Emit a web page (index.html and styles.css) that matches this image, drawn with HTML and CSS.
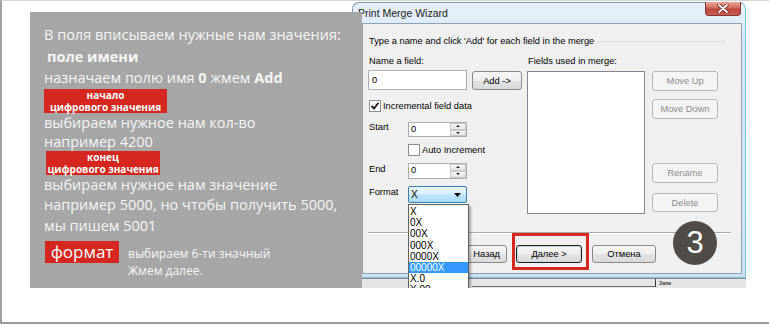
FILE: index.html
```html
<!DOCTYPE html>
<html lang="ru">
  <head>
    <meta charset="UTF-8" />
    <meta name="viewport" content="width=device-width, initial-scale=1.0" />
    <title>Print Merge Wizard</title>
    <link rel="stylesheet" href="styles.css">
  </head>
  <body>
    <div class="sheet">
      <div class="note">
        <div class="line">В поля вписываем нужные нам значения:</div>
        <div class="line sub"><b>поле имени</b></div>
        <div class="line">назначаем полю имя <b>0</b> жмем <b>Add</b></div>
        <div class="tag tag-start">начало<br>цифрового значения</div>
        <div class="line after">выбираем нужное нам кол-во</div>
        <div class="line after">например 4200</div>
        <div class="tag tag-end">конец<br>цифрового значения</div>
        <div class="line after">выбираем нужное нам значение</div>
        <div class="line">например 5000, но чтобы получить 5000,</div>
        <div class="line">мы пишем 5001</div>
        <div class="format-row">
          <span class="tag-big">формат</span>
          <div class="hint">выбираем 6-ти значный<br>Жмем далее.</div>
        </div>
      </div>

      <div class="shot">
        <div class="window">
          <div class="titlebar">
            <span class="title">Print Merge Wizard</span>
            <span class="close">
              <svg width="12" height="9" viewBox="0 0 12 9">
                <path d="M2 1 L10 8 M10 1 L2 8" stroke="#5a1c1c" stroke-width="3.2" stroke-linecap="round"/>
                <path d="M2 1 L10 8 M10 1 L2 8" stroke="#fff" stroke-width="1.8" stroke-linecap="round"/>
              </svg>
            </span>
          </div>
          <div class="client">
            <div class="group-head">
              <span>Type a name and click 'Add' for each field in the merge</span>
              <i class="rule"></i>
            </div>
            <div class="fields">
              <div class="col-left">
                <div class="lbl">Name a field:</div>
                <div class="name-row">
                  <div class="input">0</div>
                  <div class="btn btn-add">Add -&gt;</div>
                </div>
                <div class="check-row">
                  <span class="cb">
                    <svg width="10" height="10" viewBox="0 0 10 10">
                      <path d="M1.5 5 L4 7.5 L8.5 1.8" fill="none" stroke="#111" stroke-width="1.8"/>
                    </svg>
                  </span>
                  <span>Incremental field data</span>
                </div>
                <div class="spin-row">
                  <span class="lbl-side">Start</span>
                  <div class="spin">
                    <span class="val">0</span>
                    <span class="arrows">
                      <i class="up"></i>
                      <i class="down"></i>
                    </span>
                  </div>
                </div>
                <div class="check-row auto">
                  <span class="cb"></span>
                  <span>Auto Increment</span>
                </div>
                <div class="spin-row end">
                  <span class="lbl-side">End</span>
                  <div class="spin tall">
                    <span class="val">0</span>
                    <span class="arrows">
                      <i class="up"></i>
                      <i class="down"></i>
                    </span>
                  </div>
                </div>
                <div class="spin-row fmt">
                  <span class="lbl-side">Format</span>
                  <div class="combo-wrap">
                    <div class="combo">
                      <span>X</span>
                      <svg width="7" height="4" viewBox="0 0 7 4"><polygon points="0,0 7,0 3.5,4" fill="#000"/></svg>
                    </div>
                    <ul class="drop">
                      <li>X</li>
                      <li>0X</li>
                      <li>00X</li>
                      <li>000X</li>
                      <li>0000X</li>
                      <li class="sel">00000X</li>
                      <li>X.0</li>
                      <li>X.00</li>
                    </ul>
                  </div>
                </div>
              </div>
              <div class="col-mid">
                <div class="lbl">Fields used in merge:</div>
                <div class="listbox"></div>
              </div>
              <div class="col-right">
                <div class="btn off">Move Up</div>
                <div class="btn off move-down">Move Down</div>
                <div class="btn off rename">Rename</div>
                <div class="btn off delete">Delete</div>
              </div>
            </div>
            <div class="sep"></div>
            <div class="nav">
              <div class="btn back">Назад</div>
              <span class="focus"><span class="btn default">Далее &gt;</span></span>
              <div class="btn cancel">Отмена</div>
            </div>
            <div class="step">3</div>
          </div>
        </div>
        <div class="under">
          <div class="under-line"></div>
          <span class="under-txt">Запи</span>
        </div>
      </div>
    </div>
  </body>
</html>
```

FILE: styles.css
```css
* {
  margin: 0;
  padding: 0;
}
body {
  background: #fff;
  overflow: hidden;
}
.sheet {
  display: flex;
  align-items: flex-start;
  box-sizing: border-box;
  height: 324px;
  border-top: 1px solid #d4d4d4;
  border-left: 2px solid #a0a0a0;
  border-bottom: 2px solid #9c9c9c;
  overflow: hidden;
}

/* grey note on the left */
.note {
  position: relative;
  z-index: 2;
  flex-shrink: 0;
  box-sizing: border-box;
  width: 332px;
  height: 276px;
  margin: 11px 0 0 28px;
  padding: 12px 8px 0 14px;
  background: #a6a6a6;
  color: #f5f5f5;
  font-family: "Open Sans", "Noto Sans", sans-serif;
  font-size: 14.5px;
}
.line {
  line-height: 21.5px;
  white-space: nowrap;
}
.line.after {
  line-height: 19px;
}
.sub {
  padding-left: 3px;
}
.tag {
  background: #d5271f;
  color: #fff;
  font-size: 10px;
  font-weight: 700;
  line-height: 12px;
  text-align: center;
  white-space: nowrap;
}
.tag-start {
  width: 123px;
}
.tag-end {
  width: 114px;
  margin-left: 2px;
}
.format-row {
  display: flex;
  align-items: flex-start;
  margin-top: 4px;
}
.tag-big {
  width: 74px;
  height: 22px;
  margin-left: 1px;
  background: #d5271f;
  color: #fff;
  font-size: 17px;
  line-height: 21px;
  text-align: center;
}
.hint {
  margin: 4px 0 0 9px;
  font-size: 12px;
  line-height: 17px;
}

/* dialog screenshot */
.shot {
  flex-shrink: 0;
  width: 394px;
  height: 286px;
  margin: 1px 0 0 -10px;
  overflow: hidden;
  font-family: "Liberation Sans", Arial, sans-serif;
}
.window {
  box-sizing: border-box;
  height: 276px;
  border: 1px solid #7f93a8;
  border-right-color: #78c3de;
  border-bottom-color: #78c3de;
  border-radius: 7px 7px 0 0;
  background: linear-gradient(180deg, #e8f1fa 0, #d8e7f6 40px, #cde0f2 100%);
}
.titlebar {
  display: flex;
  align-items: flex-start;
  height: 20px;
  padding-left: 5px;
}
.title {
  font-size: 10.5px;
  line-height: 20px;
  color: #1b1b1b;
}
.close {
  display: flex;
  align-items: center;
  justify-content: center;
  box-sizing: border-box;
  width: 36px;
  height: 14px;
  margin: -1px 4px 0 auto;
  border: 1px solid #83363a;
  border-top: none;
  border-radius: 0 0 4px 4px;
  background: linear-gradient(180deg, #e9a99a 0, #d26a5c 45%, #c0473c 55%, #c9604e 100%);
}
.client {
  position: relative;
  box-sizing: border-box;
  height: 251px;
  margin: 0 3px 3px 9px;
  border: 1px solid #8fa1b4;
  background: #f0f0f0;
  font-size: 9.3px;
  color: #000;
}
.group-head {
  display: flex;
  align-items: center;
  margin: 11px 16px 0 0;
  padding-left: 6px;
  line-height: 12px;
  white-space: nowrap;
}
.rule {
  flex: 1;
  margin-left: 4px;
  border-top: 1px solid #d5dde3;
}
.fields {
  display: flex;
  margin-top: 8px;
  padding-left: 5px;
}
.col-left {
  width: 154px;
}
.lbl {
  padding-left: 1px;
  line-height: 12px;
}
.name-row {
  display: flex;
  align-items: flex-start;
  margin-top: 3px;
}
.input {
  box-sizing: border-box;
  width: 99px;
  height: 20px;
  padding-left: 3px;
  border: 1px solid #abadb3;
  background: #fff;
  line-height: 18px;
}
.btn {
  display: flex;
  align-items: center;
  justify-content: center;
  box-sizing: border-box;
  width: 66px;
  height: 18px;
  border: 1px solid #8a8a8a;
  border-radius: 3px;
  background: linear-gradient(180deg, #f6f6f6 0, #eeeeee 50%, #e3e3e3 51%, #dadada 100%);
  white-space: nowrap;
}
.btn-add {
  width: 50px;
  height: 19px;
  margin: 1px 0 0 5px;
}
.check-row {
  display: flex;
  align-items: center;
  height: 12px;
  margin-top: 10px;
}
.cb {
  display: flex;
  align-items: center;
  justify-content: center;
  box-sizing: border-box;
  width: 12px;
  height: 12px;
  margin: 0 2px 0 1px;
  border: 1px solid #8e8f8f;
  background: #fff;
}
.auto {
  margin-top: 7px;
  padding-left: 39px;
}
.spin-row {
  display: flex;
  align-items: flex-start;
  margin-top: 10px;
}
.lbl-side {
  box-sizing: border-box;
  width: 40px;
  padding-left: 1px;
  line-height: 11px;
}
.spin {
  display: flex;
  box-sizing: border-box;
  width: 59px;
  height: 15px;
  border: 1px solid #abadb3;
  background: #fff;
}
.spin.tall {
  height: 16px;
}
.val {
  flex: 1;
  padding-left: 2px;
  line-height: 13px;
}
.arrows {
  display: flex;
  flex-direction: column;
  width: 16px;
}
.arrows i {
  position: relative;
  flex: 1;
  border: 1px solid #c9c9c9;
  background: linear-gradient(180deg, #f7f7f7, #e4e4e4);
}
.arrows i::after {
  content: "";
  position: absolute;
  left: 5px;
  top: 1px;
  border-left: 2px solid transparent;
  border-right: 2px solid transparent;
}
.arrows .up::after {
  border-bottom: 2px solid #222;
}
.arrows .down::after {
  border-top: 2px solid #222;
}
.end {
  margin-top: 7px;
}
.end .lbl-side {
  padding-top: 1px;
}
.fmt {
  margin-top: 7px;
}
.fmt .lbl-side {
  line-height: 12px;
}
.combo-wrap {
  position: relative;
}
.combo {
  display: flex;
  align-items: center;
  justify-content: space-between;
  box-sizing: border-box;
  width: 59px;
  height: 17px;
  padding: 0 5px 0 2px;
  border: 1px solid #3c7fb1;
  border-radius: 2px;
  background: linear-gradient(180deg, #eaf6fd 0, #d9f0fc 45%, #bee6fd 55%, #a7d9f5 100%);
  font-size: 10px;
}
.drop {
  position: absolute;
  z-index: 5;
  top: 18px;
  left: 0;
  box-sizing: border-box;
  width: 61px;
  padding-top: 1px;
  border: 1px solid #646464;
  background: #fff;
  box-shadow: 2px 2px 2px rgba(0, 0, 0, 0.3);
  list-style: none;
  font-size: 10px;
  line-height: 11.2px;
}
.drop li {
  padding-left: 1px;
}
.drop .sel {
  background: #3399ff;
  color: #fff;
}
.col-mid {
  width: 118px;
  margin-left: 5px;
}
.listbox {
  box-sizing: border-box;
  height: 143px;
  margin-top: 4px;
  border: 1px solid #828790;
  background: #fff;
}
.col-right {
  width: 66px;
  margin-left: 7px;
  padding-top: 16px;
}
.btn.off {
  height: 20px;
  border-color: #b5b9bc;
  background: #f4f4f4;
  color: #8d8d8d;
}
.move-down {
  margin-top: 8px;
}
.rename {
  margin-top: 44px;
}
.btn.delete {
  height: 19px;
  margin-top: 10px;
}
.sep {
  margin: 18px 10px 0 5px;
  border-top: 1px solid #a8a8a8;
  border-bottom: 1px solid #fff;
}
.nav {
  display: flex;
  margin-top: 11px;
  padding-left: 78px;
}
.btn.back {
  justify-content: flex-end;
  padding-right: 6px;
}
.focus {
  position: relative;
  margin-left: 9px;
}
.focus::after {
  content: "";
  position: absolute;
  top: -12px;
  left: -4px;
  right: -7px;
  bottom: -7px;
  border: 3px solid #d6281f;
}
.btn.default {
  border-color: #1e1e1e;
  box-shadow: inset 0 0 0 1px #c7d9ea;
}
.cancel {
  width: 64px;
  margin-left: 10px;
}
.step {
  position: absolute;
  left: 310px;
  top: 197px;
  width: 44px;
  height: 44px;
  border-radius: 50%;
  background: #514b48;
  color: #fff;
  font-size: 31px;
  line-height: 44px;
  text-align: center;
}
.under {
  display: flex;
  align-items: flex-start;
  height: 10px;
  border-top: 1px solid #8c8c8c;
  background: #e6e6e6;
}
.under-line {
  width: 183px;
  height: 7px;
  margin-left: 120px;
  border-bottom: 1px solid #6a6a6a;
  border-right: 1px solid #333;
}
.under-txt {
  margin-left: 3px;
  font-size: 5px;
  font-weight: 700;
  line-height: 8px;
  color: #333;
}
```
